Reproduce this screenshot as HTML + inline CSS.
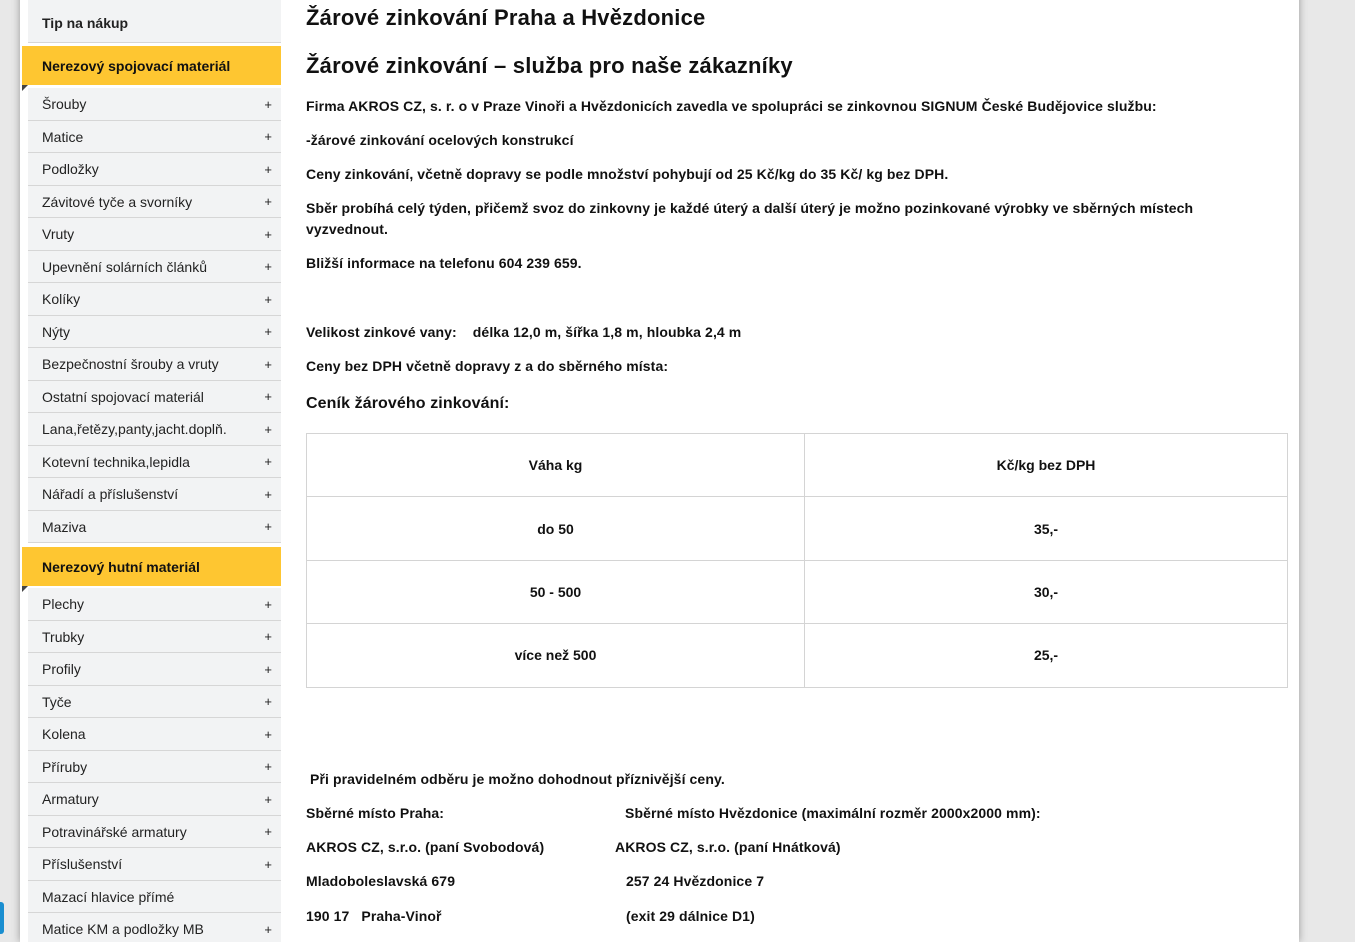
<!DOCTYPE html>
<html style="overflow:hidden;height:942px"><head><meta charset="utf-8"><style>
*{margin:0;padding:0;box-sizing:border-box}
body{width:1355px;height:942px;overflow:hidden;background:#e8e8e8;font-family:"Liberation Sans",sans-serif;color:#111;position:relative}
#wrap{position:absolute;left:20px;top:-10px;width:1279px;height:952px;background:#fff;box-shadow:0 0 8px rgba(0,0,0,.35)}
.it{position:absolute;left:28px;width:253px;background:#f2f3f4;border-bottom:1px solid #d6d6d6;font-size:14px;color:#222;padding-left:14px;display:flex;align-items:center}
.it span{position:absolute;right:9px;font-size:13px}
.y{position:absolute;left:22px;width:259px;background:#fec631;font-weight:bold;font-size:14px;padding-left:20px;display:flex;align-items:center}
.y:after{content:"";position:absolute;left:0;bottom:-6px;border-top:6px solid #444;border-right:6px solid transparent}
.t{position:absolute;left:306px;font-size:14px;font-weight:bold;white-space:nowrap;letter-spacing:0.1px}
h1,h2{position:absolute;left:306px;font-size:22px;white-space:nowrap;letter-spacing:0.2px}
table{position:absolute;left:306px;top:433px;width:982px;border-collapse:collapse}
td{border:1px solid #d4d4d4;height:63.4px;text-align:center;font-size:14px;font-weight:bold}
</style></head><body>
<div id="wrap"></div>
<div style="position:absolute;left:0;top:902px;width:4px;height:32px;background:#1a8ed0;border-radius:0 3px 3px 0"></div>
<div class="it" style="top:0;height:43px;font-weight:bold;font-size:14px;padding-top:3px">Tip na nákup</div>
<div class="y" style="top:46px;height:39px">Nerezový spojovací materiál</div>
<div class="y" style="top:547px;height:39px">Nerezový hutní materiál</div>
<script>
function L(items,start,step){let h='';items.forEach((s,i)=>{let p=s.endsWith('!')?'':'<span>+</span>';s=s.replace('!','');h+=`<div class="it" style="top:${(start+i*step).toFixed(1)}px;height:${step}px;padding-top:1px">${s}${p}</div>`});document.write(h)}
L(["Šrouby","Matice","Podložky","Závitové tyče a svorníky","Vruty","Upevnění solárních článků","Kolíky","Nýty","Bezpečnostní šrouby a vruty","Ostatní spojovací materiál","Lana,řetězy,panty,jacht.doplň.","Kotevní technika,lepidla","Nářadí a příslušenství","Maziva"],88,32.5);
L(["Plechy","Trubky","Profily","Tyče","Kolena","Příruby","Armatury","Potravinářské armatury","Příslušenství","Mazací hlavice přímé!","Matice KM a podložky MB"],588,32.5);
</script>
<h1 style="top:5px">Žárové zinkování Praha a Hvězdonice</h1>
<h2 style="top:53px">Žárové zinkování – služba pro naše zákazníky</h2>
<div class="t" style="top:98px">Firma AKROS CZ, s. r. o v Praze Vinoři a Hvězdonicích zavedla ve spolupráci se zinkovnou SIGNUM České Budějovice službu:</div>
<div class="t" style="top:132px">-žárové zinkování ocelových konstrukcí</div>
<div class="t" style="top:166px">Ceny zinkování, včetně dopravy se podle množství pohybují od 25 Kč/kg do 35 Kč/ kg bez DPH.</div>
<div class="t" style="top:200px">Sběr probíhá celý týden, přičemž svoz do zinkovny je každé úterý a další úterý je možno pozinkované výrobky ve sběrných místech</div>
<div class="t" style="top:221px">vyzvednout.</div>
<div class="t" style="top:255px">Bližší informace na telefonu 604 239 659.</div>
<div class="t" style="top:324px">Velikost zinkové vany: &nbsp;&nbsp; délka 12,0 m, šířka 1,8 m, hloubka 2,4 m</div>
<div class="t" style="top:358px">Ceny bez DPH včetně dopravy z a do sběrného místa:</div>
<div class="t" style="top:395px;font-size:16px">Ceník žárového zinkování:</div>
<table>
<tr><td style="width:498px">Váha kg</td><td>Kč/kg bez DPH</td></tr>
<tr><td>do 50</td><td>35,-</td></tr>
<tr><td>50 - 500</td><td>30,-</td></tr>
<tr><td>více než 500</td><td>25,-</td></tr>
</table>
<div class="t" style="top:771px;left:310px">Při pravidelném odběru je možno dohodnout příznivější ceny.</div>
<div class="t" style="top:805px">Sběrné místo Praha:</div>
<div class="t" style="top:805px;left:625px">Sběrné místo Hvězdonice (maximální rozměr 2000x2000 mm):</div>
<div class="t" style="top:839px">AKROS CZ, s.r.o. (paní Svobodová)</div>
<div class="t" style="top:839px;left:615px">AKROS CZ, s.r.o. (paní Hnátková)</div>
<div class="t" style="top:873px">Mladoboleslavská 679</div>
<div class="t" style="top:873px;left:626px">257 24 Hvězdonice 7</div>
<div class="t" style="top:908px">190 17 &nbsp; Praha-Vinoř</div>
<div class="t" style="top:908px;left:626px">(exit 29 dálnice D1)</div>
</body></html>
